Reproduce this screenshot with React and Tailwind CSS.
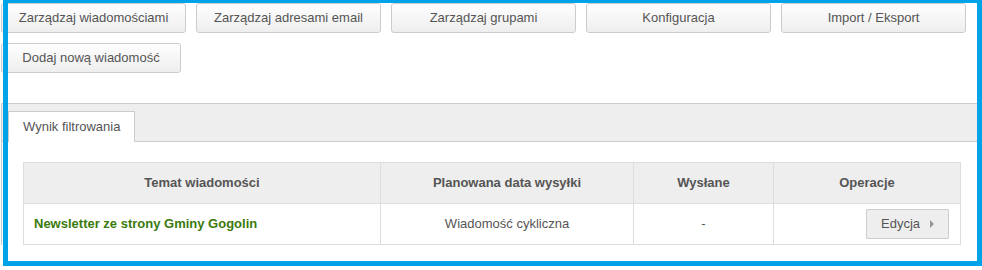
const topButtons = ['Zarządzaj wiadomościami', 'Zarządzaj adresami email', 'Zarządzaj grupami', 'Konfiguracja', 'Import / Eksport'];

const rows = [
    { subject: 'Newsletter ze strony Gminy Gogolin', date: 'Wiadomość cykliczna', sent: '-' },
];

function NavButton({ label, className = '' }) {
    return (
        <button className={`h-[30px] rounded-[3px] border border-[#cccccc] bg-gradient-to-b from-[#fefefe] to-[#eeeeee] text-[13px] text-[#555555] ${className}`}>
            {label}
        </button>
    );
}

export default function App() {
    return (
        <div className="relative w-[982px] h-[270px] bg-white overflow-hidden font-['Liberation_Sans',Arial,sans-serif]">
            <div className="pl-[1px] pt-[3px]">
                <div className="flex gap-[10px]">
                    {topButtons.map(b => <NavButton key={b} label={b} className="w-[185px]" />)}
                </div>
                <div className="mt-[10px]">
                    <NavButton label="Dodaj nową wiadomość" className="w-[180px]" />
                </div>

                {/* tabs */}
                <div className="mt-[30px] border-l border-[#cccccc]">
                    <div className="flex items-end h-[39px] bg-[#eeeeee] border-t border-b border-[#cccccc]">
                        <div className="ml-[6px] -mb-px h-[31px] px-[14px] flex items-center bg-white border border-b-0 border-[#cccccc] text-[13px] text-[#555555]">
                            Wynik filtrowania
                        </div>
                    </div>
                    <div className="pl-[21px] pt-[20px]">
                        <table className="w-[937px] table-fixed border-collapse text-[13px] text-[#555555]">
                            <colgroup>
                                <col className="w-[357px]" />
                                <col className="w-[253px]" />
                                <col className="w-[140px]" />
                                <col className="w-[187px]" />
                            </colgroup>
                            <thead>
                                <tr className="h-[41px] bg-[#eeeeee]">
                                    {['Temat wiadomości', 'Planowana data wysyłki', 'Wysłane', 'Operacje'].map(h => (
                                        <th key={h} className="border border-[#dddddd] font-bold text-center">{h}</th>
                                    ))}
                                </tr>
                            </thead>
                            <tbody>
                                {rows.map(r => (
                                    <tr key={r.subject} className="h-[41px]">
                                        <td className="border border-[#dddddd] pl-[10px] font-bold text-[#3b7a0c]">{r.subject}</td>
                                        <td className="border border-[#dddddd] text-center">{r.date}</td>
                                        <td className="border border-[#dddddd] text-center">{r.sent}</td>
                                        <td className="border border-[#dddddd] pr-[11px]">
                                            <div className="flex justify-end">
                                                <button className="h-[30px] w-[83px] pl-[14px] flex items-center rounded-[1px] border border-[#cccccc] bg-[#eeeeee] text-[13px] text-[#555555]">
                                                    Edycja
                                                    <svg width="5" height="8" viewBox="0 0 5 8" className="ml-[10px]">
                                                        <path d="M0 0 L4 4 L0 8 Z" fill="#999999" />
                                                    </svg>
                                                </button>
                                            </div>
                                        </td>
                                    </tr>
                                ))}
                            </tbody>
                        </table>
                    </div>
                </div>
            </div>

            {/* highlight frame drawn over the screenshot */}
            <div className="absolute left-[3px] top-0 w-[979px] h-[266px] border-[#00a2e8] border-t-[3px] border-l-[5px] border-r-[5px] border-b-[5px] pointer-events-none" />
        </div>
    );
}
